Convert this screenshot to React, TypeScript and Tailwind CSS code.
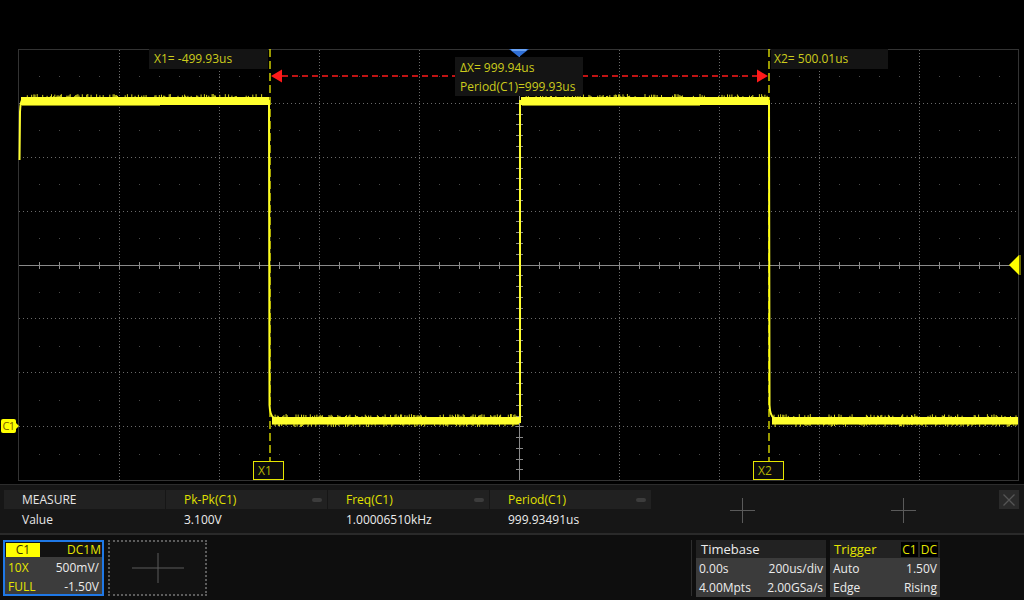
import React from 'react';

const YEL = '#ffff2e';
const FONT = { fontFamily: '"Open Sans", "Noto Sans", sans-serif' };

// small deterministic noise so the trace looks like a real capture
function rng(seed: number) {
  let s = seed;
  return () => {
    s = (s * 1103515245 + 12345) % 2147483648;
    return s / 2147483648;
  };
}

const noise = (() => {
  const r = rng(11);
  const segs: [number, number, number, number][] = [
    [24, 268, 97, -1],
    [524, 768, 97, -1],
    [274, 518, 417, -1],
    [774, 1017, 417, -1],
    [274, 518, 424, 1],
    [774, 1017, 424, 1],
  ];
  let d = '';
  for (const [x0, x1, y0, dir] of segs) {
    for (let x = x0; x < x1; x += 1.1) {
      if (r() < 0.35) {
        const len = 0.8 + r() * 2.2;
        d += `M${x.toFixed(1)} ${y0} v${(dir * len).toFixed(1)} `;
      }
    }
  }
  return d;
})();

const hLines = [103, 157, 211, 318, 372, 426];
const minorRows = [76, 130, 184, 238, 292, 346, 400, 454];
const vLines = [119, 219, 319, 419, 619, 719, 819, 919];

const Scope: React.FC = () => {
  const hTicks: number[] = [];
  for (let x = 39; x < 1018; x += 20) hTicks.push(x);
  const vTicks: number[] = [];
  for (let y = 49 + 10.78; y < 480; y += 10.78) vTicks.push(y);

  return (
    <svg width="1024" height="435" viewBox="0 49 1024 435" className="block">
      {/* grid */}
      <rect x="18.5" y="49.5" width="1000" height="431" fill="none" stroke="#333" />
      {vLines.map((x) => (
        <line key={x} x1={x + 0.5} y1="50" x2={x + 0.5} y2="480" stroke="#6a6a6a" strokeDasharray="1 2" />
      ))}
      {hLines.map((y) => (
        <line key={y} x1="19" y1={y + 0.5} x2="1018" y2={y + 0.5} stroke="#6a6a6a" strokeDasharray="1 3" />
      ))}
      {minorRows.map((y) => (
        <line key={y} x1="39" y1={y + 0.5} x2="1018" y2={y + 0.5} stroke="#4a4a4a" strokeDasharray="1 19" />
      ))}
      <line x1="19" y1="265.5" x2="1018" y2="265.5" stroke="#8a8a8a" />
      <line x1="519.5" y1="50" x2="519.5" y2="480" stroke="#8a8a8a" />
      {hTicks.map((x) => (
        <line key={x} x1={x + 0.5} y1="262" x2={x + 0.5} y2="269" stroke="#8a8a8a" />
      ))}
      {vTicks.map((y) => (
        <line key={y} x1="516" y1={Math.round(y) + 0.5} x2="523" y2={Math.round(y) + 0.5} stroke="#8a8a8a" />
      ))}

      {/* waveform */}
      <g fill={YEL}>
        <rect x="21" y="97" width="248" height="8" />
        <rect x="521" y="97" width="248" height="8" />
        <rect x="272" y="417" width="247" height="7" />
        <rect x="772" y="417" width="246" height="7" />
      </g>
      <g stroke="#8c8c12" strokeWidth="1">
        <line x1="22" y1="105.5" x2="160" y2="105.5" />
        <line x1="522" y1="105.5" x2="700" y2="105.5" />
        <line x1="272" y1="424.5" x2="519" y2="424.5" />
        <line x1="772" y1="424.5" x2="1018" y2="424.5" />
      </g>
      <path d={noise} stroke="#d8d820" strokeWidth="1" />
      <g stroke={YEL} strokeWidth="2" fill="none">
        <path d="M19.5 160 L20 112 Q20.5 100 23 99" />
        <path d="M269 100 L269.5 405 Q270 416 274 418" />
        <path d="M520 423 L520 100" />
        <path d="M769 100 L769.5 405 Q770 416 774 418" />
      </g>

      {/* cursors */}
      <g stroke="#ffff00" strokeWidth="1.2" strokeDasharray="8 4">
        <line x1="270" y1="49" x2="270" y2="462" />
        <line x1="769" y1="49" x2="769" y2="462" />
      </g>
      <line x1="282" y1="76" x2="758" y2="76" stroke="#ff1a1a" strokeWidth="1.5" strokeDasharray="6 4" />
      <polygon points="271,76 282,69.5 282,82.5" fill="#ff1a1a" />
      <polygon points="768,76 757,69.5 757,82.5" fill="#ff1a1a" />

      {/* trigger markers */}
      <polygon points="509,49 529,49 519,57" fill="#2f6fd6" />
      <polygon points="511,49 527,49 526,51 512,51" fill="#6aa2f2" />
      <polygon points="1019,255 1019,275 1009,265" fill="#ffff00" />
      <rect x="1019" y="255" width="2" height="20" fill="#6a6a00" />
    </svg>
  );
};

const PlotArea: React.FC = () => {
  return (
    <div className="relative h-[435px]">
      <Scope />
      <div className="absolute left-[149px] top-0 w-[119px] h-[20px] bg-[#141414] pl-[5px] text-[12px] leading-[20px] text-[#cccc1c]">
        X1= -499.93us
      </div>
      <div className="absolute left-[771px] top-0 w-[117px] h-[20px] bg-[#141414] pl-[3px] text-[12px] leading-[20px] text-[#cccc1c]">
        X2= 500.01us
      </div>
      <div className="absolute left-[455px] top-[8px] w-[128px] h-[39px] bg-[#141414] pl-[5px] pt-[1px] text-[12px] leading-[19px] text-[#cccc1c]">
        <div>ΔX= 999.94us</div>
        <div>Period(C1)=999.93us</div>
      </div>
      <div className="absolute left-[253px] top-[412px] w-[31px] h-[19px] border border-[#e6e600] bg-[#101010]/70 pl-[4px] text-[12px] leading-[17px] text-[#b8b800]">
        X1
      </div>
      <div className="absolute left-[753px] top-[412px] w-[31px] h-[19px] border border-[#e6e600] bg-[#101010]/70 pl-[4px] text-[12px] leading-[17px] text-[#b8b800]">
        X2
      </div>
      <div className="absolute left-[1px] top-[370px] flex items-center">
        <div className="w-[15px] h-[14px] rounded-[2px] bg-[#ffff00] text-[11px] leading-[14px] text-[#7a5c00] text-center tracking-[-0.5px]">
          C1
        </div>
        <div className="w-0 h-0 border-y-[3px] border-y-transparent border-l-[3px] border-l-[#ffff00]" />
      </div>
    </div>
  );
};

const Cross: React.FC<{ w: number; h: number }> = ({ w, h }) => (
  <svg width={w} height={h} viewBox={`0 0 ${w} ${h}`}>
    <line x1="0" y1={h / 2} x2={w} y2={h / 2} stroke="#5a5a5a" />
    <line x1={w / 2} y1="0" x2={w / 2} y2={h} stroke="#5a5a5a" />
  </svg>
);

const Pill: React.FC = () => <div className="w-[10px] h-[4px] rounded-full bg-[#3c3c3c]" />;

const measures = [
  { name: 'Pk-Pk(C1)', value: '3.100V' },
  { name: 'Freq(C1)', value: '1.00006510kHz' },
  { name: 'Period(C1)', value: '999.93491us' },
];

const MeasureBar: React.FC = () => {
  return (
    <div className="h-[51px] border-t border-[#2c2c2c] border-b-2 border-b-[#2a2a2a] bg-[#161616] pt-[5px] pl-[4px] pr-[5px] flex text-[12px]">
      <div className="w-[161px] mr-[1px]">
        <div className="h-[19px] bg-[#212121] pl-[18px] leading-[20px] text-[#e6e6e6]">MEASURE</div>
        <div className="h-[21px] pl-[18px] leading-[22px] text-[#e6e6e6]">Value</div>
      </div>
      {measures.map((m) => (
        <div key={m.name} className="w-[161px] mr-[1px]">
          <div className="h-[19px] bg-[#212121] pl-[18px] pr-[5px] flex items-center justify-between text-[#e0e000]">
            <span className="leading-[20px]">{m.name}</span>
            <Pill />
          </div>
          <div className="h-[21px] pl-[18px] leading-[22px] text-[#ececec]">{m.value}</div>
        </div>
      ))}
      <div className="w-[180px] h-[40px] flex items-center justify-center">
        <Cross w={25} h={25} />
      </div>
      <div className="w-[142px] h-[40px] flex items-center justify-center">
        <Cross w={25} h={25} />
      </div>
      <div className="ml-auto w-[20px] h-[19px] bg-[#2a2a2a] flex items-center justify-center">
        <svg width="12" height="12" viewBox="0 0 12 12">
          <path d="M0.5 0.5 L11.5 11.5 M11.5 0.5 L0.5 11.5" stroke="#555" strokeWidth="1.3" />
        </svg>
      </div>
    </div>
  );
};

const Row: React.FC<{ l: string; r: string; lc?: string; rc?: string }> = ({ l, r, lc = 'text-[#ececec]', rc = 'text-[#ececec]' }) => (
  <div className="h-[19px] flex justify-between items-center px-[3px]">
    <span className={lc}>{l}</span>
    <span className={rc}>{r}</span>
  </div>
);

const StatusBar: React.FC = () => {
  return (
    <div className="flex-1 bg-[#0e0e0e] flex pl-[3px] pt-[5px] text-[12px]">
      <div className="w-[101px] h-[56px] border-2 border-[#1f78e6] bg-[#3c3c3c] flex flex-col">
        <div className="h-[16px] flex bg-[#121212]">
          <div className="w-[34px] bg-[#ffff00] ml-[1px] mt-[1px] h-[14px] text-center leading-[14px] text-[#3a3000]">C1</div>
          <div className="flex-1 text-right pr-[1px] leading-[15px] text-[#e6e600]">DC1M</div>
        </div>
        <div className="pt-[1px]">
          <Row l="10X" r="500mV/" lc="text-[#e6e600]" />
          <Row l="FULL" r="-1.50V" lc="text-[#e6e600]" />
        </div>
      </div>
      <div className="ml-[4px] w-[99px] h-[56px] border-2 border-dotted border-[#5c5c5c] bg-[#121212] flex items-center justify-center">
        <Cross w={52} h={30} />
      </div>
      <div className="flex-1" />
      <div className="w-px h-[56px] bg-[#2e2e2e] mr-[4px]" />
      <div className="w-[130px] h-[56px] flex flex-col">
        <div className="h-[18px] bg-[#222] pl-[5px] leading-[19px] text-[13px] text-[#ececec]">Timebase</div>
        <div className="flex-1 bg-[#3b3b3b] pt-[1px]">
          <Row l="0.00s" r="200us/div" />
          <Row l="4.00Mpts" r="2.00GSa/s" />
        </div>
      </div>
      <div className="ml-[4px] mr-[84px] w-[110px] h-[56px] flex flex-col">
        <div className="h-[18px] bg-[#222] pl-[4px] pr-[2px] flex items-center justify-between text-[#e6e600]">
          <span className="text-[13px] leading-[19px]">Trigger</span>
          <span className="flex gap-[2px] text-[12px]">
            <span className="bg-black px-[1px] leading-[15px]">C1</span>
            <span className="bg-black px-[1px] leading-[15px]">DC</span>
          </span>
        </div>
        <div className="flex-1 bg-[#3b3b3b] pt-[1px]">
          <Row l="Auto" r="1.50V" />
          <Row l="Edge" r="Rising" />
        </div>
      </div>
    </div>
  );
};

const App: React.FC = () => {
  return (
    <div className="w-[1024px] h-[600px] bg-black flex flex-col overflow-hidden" style={FONT}>
      <div className="h-[49px] shrink-0" />
      <PlotArea />
      <MeasureBar />
      <StatusBar />
    </div>
  );
};

export default App;
